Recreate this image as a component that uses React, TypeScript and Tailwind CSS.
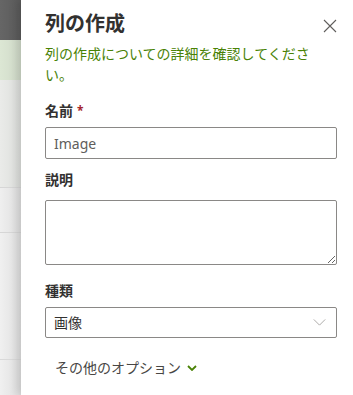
import React from 'react';

const font = { fontFamily: '"Segoe UI", "Noto Sans", "Noto Sans CJK JP", sans-serif' };

// Strip of the page behind the panel
const Backdrop: React.FC = () => (
    <div className="w-[21px] shrink-0 flex flex-col">
        <div className="h-[40px] bg-gradient-to-r from-[#666666] to-[#5a5a5a]"></div>
        <div className="h-[40px] bg-gradient-to-r from-[#dce7d4] to-[#cfd9c8]"></div>
        <div className="h-[108px] bg-gradient-to-r from-[#eaebe9] to-[#dcdedb] border-b border-[#d6d6d6]"></div>
        <div className="h-[45px] bg-gradient-to-r from-[#efefef] to-[#dedede] border-b border-[#d6d6d6]"></div>
        <div className="h-[127px] bg-gradient-to-r from-[#f0f0f0] to-[#dfdfdf] border-b border-[#d9d9d9]"></div>
        <div className="flex-1 bg-gradient-to-r from-[#f0f0f0] to-[#dfdfdf]"></div>
    </div>
);

const Label: React.FC<{ text: string; required?: boolean; className?: string }> = ({ text, required, className }) => (
    <div className={`text-[14px] leading-[20px] font-bold text-[#323130] ${className ?? ''}`}>
        {text}
        {required && <span className="text-[#a4262c] ml-[4px] text-[12px] align-top">*</span>}
    </div>
);

const App: React.FC = () => {
    return (
        <div className="w-[353px] h-[395px] flex overflow-hidden bg-white" style={font}>
            <Backdrop />
            <div className="flex-1 bg-white relative shadow-[-4px_0_8px_rgba(0,0,0,0.12)] pl-[24px] pr-[16px] pt-[10px]">
                {/* Close button */}
                <button className="absolute top-[19px] right-[16px] w-[14px] h-[14px] text-[#605e5c]">
                    <svg viewBox="0 0 14 14" className="w-full h-full" fill="none" stroke="currentColor" strokeWidth="1.1">
                        <path d="M1 1 L13 13 M13 1 L1 13" />
                    </svg>
                </button>

                <h1 className="text-[20px] leading-[28px] font-bold text-[#323130]">列の作成</h1>
                <p className="mt-[5px] text-[14px] leading-[21px] text-[#498205] pr-[10px]">
                    列の作成についての詳細を確認してください。
                </p>

                <Label text="名前" required className="mt-[16px]" />
                <div className="mt-[6px] h-[32px] border border-[#8a8886] rounded-[2px] flex items-center px-[8px] text-[14px] text-[#605e5c]">
                    Image
                </div>

                <Label text="説明" className="mt-[11px]" />
                <textarea
                    className="mt-[10px] block w-full h-[65px] border border-[#8a8886] rounded-[2px] outline-none"
                    defaultValue=""
                />

                <Label text="種類" className="mt-[16px]" />
                <div className="mt-[6px] h-[31px] border border-[#8a8886] rounded-[2px] flex items-center justify-between px-[8px] text-[14px] text-[#323130]">
                    <span>画像</span>
                    <svg viewBox="0 0 14 8" className="w-[13px] h-[7px] mr-[2px]" fill="none" stroke="#a19f9d" strokeWidth="1">
                        <path d="M0.5 0.5 L7 7 L13.5 0.5" />
                    </svg>
                </div>

                <div className="mt-[20px] ml-[10px] flex items-center gap-[6px] text-[14px] leading-[20px] text-[#484644]">
                    <span>その他のオプション</span>
                    <svg viewBox="0 0 10 6" className="w-[10px] h-[6px]" fill="none" stroke="#498205" strokeWidth="1.8">
                        <path d="M1 1 L5 5 L9 1" />
                    </svg>
                </div>
            </div>
        </div>
    );
};

export default App;
